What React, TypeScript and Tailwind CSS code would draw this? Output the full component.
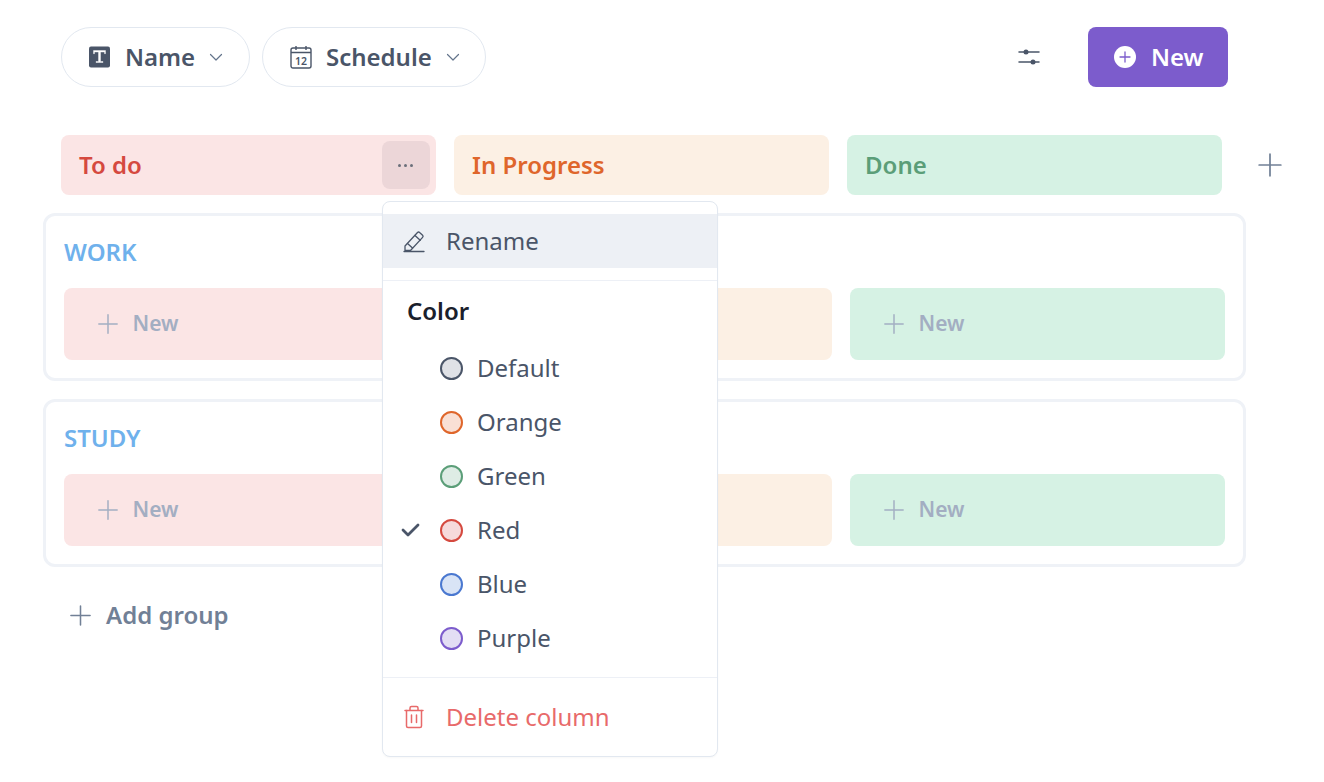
import React from 'react';

const FONT = "font-['Noto_Sans','Open_Sans',sans-serif]";

const COLUMNS = [
  { name: 'To do', bg: 'bg-[#fbe5e5]', text: 'text-[#d5493f]' },
  { name: 'In Progress', bg: 'bg-[#fcf0e4]', text: 'text-[#df662b]' },
  { name: 'Done', bg: 'bg-[#d6f2e4]', text: 'text-[#5b9e78]' },
];

const COLORS = [
  { name: 'Default', dot: 'bg-[#dfe1e6] border-[#4a5568]' },
  { name: 'Orange', dot: 'bg-[#f9e0d5] border-[#df662b]' },
  { name: 'Green', dot: 'bg-[#deece5] border-[#5b9e78]' },
  { name: 'Red', dot: 'bg-[#f6dadb] border-[#d5493f]', checked: true },
  { name: 'Blue', dot: 'bg-[#d9e4f6] border-[#4a78d0]' },
  { name: 'Purple', dot: 'bg-[#e3def4] border-[#7c5ccc]' },
];

function Plus({ size = 24, className = '' }: { size?: number; className?: string }) {
  return (
    <svg width={size} height={size} viewBox="0 0 24 24" fill="none" stroke="currentColor" strokeWidth="1.6" strokeLinecap="round" className={className}>
      <path d="M12 2v20M2 12h20" />
    </svg>
  );
}

function Chevron() {
  return (
    <svg width="14" height="9" viewBox="0 0 14 9" fill="none" stroke="#64748b" strokeWidth="1.2" strokeLinecap="round" strokeLinejoin="round">
      <path d="M1.5 1.5 7 7l5.5-5.5" />
    </svg>
  );
}

function TextIcon() {
  return (
    <svg width="22" height="22" viewBox="0 0 22 22">
      <rect width="21" height="21" y="0.5" rx="2" fill="#4a5568" />
      <path d="M4.5 4.500h12v3.200h-1V6h-4v9.500H14v1H7v-1h2.500V6h-4v1.700h-1z" fill="#fff" stroke="#fff" strokeWidth="0.4" />
    </svg>
  );
}

function CalendarIcon() {
  return (
    <svg width="22" height="24" viewBox="0 0 22 24" fill="none" stroke="#4a5568" strokeWidth="1.4">
      <rect x="1" y="3" width="20" height="20" rx="2" />
      <path d="M1 7.5h20M6 1v4M16 1v4" />
      <text x="11" y="19.5" textAnchor="middle" fontSize="10.5" fontWeight="600" fill="#4a5568" stroke="none" fontFamily="Noto Sans, sans-serif">12</text>
    </svg>
  );
}

function SlidersIcon() {
  return (
    <svg width="22" height="20" viewBox="0 0 22 20" fill="none" stroke="#4a5568" strokeWidth="1.5" strokeLinecap="round">
      <path d="M1 5h20M1 15h20" />
      <circle cx="8" cy="5" r="2.5" fill="#4a5568" stroke="none" />
      <circle cx="15" cy="15" r="2.5" fill="#4a5568" stroke="none" />
    </svg>
  );
}

function PencilIcon() {
  return (
    <svg width="24" height="24" viewBox="0 0 24 24" fill="none" stroke="#4a5568" strokeWidth="1.3" strokeLinejoin="round" strokeLinecap="round">
      <path d="M3 17 15.5 3.5a1.5 1.5 0 0 1 2.100 0l3 2.800a1.5 1.500 0 0 1 0 2.100L8.500 21.500H3z" />
      <path d="m13 6.500 5.200 4.800M5.500 14.500l5 4.600M2 22.500h20" />
    </svg>
  );
}

function TrashIcon() {
  return (
    <svg width="22" height="24" viewBox="0 0 22 24" fill="none" stroke="#e86a6a" strokeWidth="1.5" strokeLinecap="round" strokeLinejoin="round">
      <path d="M2 5.5h18M7 5.500V3a1.500 1.500 0 0 1 1.500-1.500h5A1.500 1.500 0 0 1 15 3v2.500" />
      <path d="M3.500 5.500v15.500a1.500 1.500 0 0 0 1.500 1.500h12a1.500 1.500 0 0 0 1.500-1.500V5.500M8.500 10v7.500M13.500 10v7.500" />
    </svg>
  );
}

function Group({ label }: { label: string }) {
  return (
    <div className="h-[168px] rounded-xl border-[3px] border-[#eff2f7] px-[18px] bg-white">
      <div className="h-[72px] flex items-center text-[24px] font-semibold text-[#6fb1ec]">{label}</div>
      <div className="flex gap-[18px]">
        {COLUMNS.map((c) => (
          <div key={c.name} className={`${c.bg} w-[375px] h-[72px] rounded-lg flex items-center pl-[33px] gap-[13.5px] text-[#a3aec2]`}>
            <Plus size={22} />
            <span className="text-[21px] font-semibold">New</span>
          </div>
        ))}
      </div>
    </div>
  );
}

function ColumnMenu() {
  return (
    <div className="absolute left-[382px] top-[201px] w-[336px] h-[556px] bg-white border border-[#e2e8f0] rounded-lg shadow-[0_1px_2px_rgba(0,0,0,0.03)] text-[#4a5568] text-[24px]">
      <div className="mt-[12px] h-[54px] bg-[#edf0f5] flex items-center pl-[19px] gap-[20px]">
        <PencilIcon />
        <span>Rename</span>
      </div>
      <div className="mt-[12px] border-t border-[#edf0f6]" />
      <div className="h-[60px] flex items-center pl-[24px] font-semibold text-[#1a202c]">Color</div>
      <div className="flex flex-col">
        {COLORS.map((c) => (
          <div key={c.name} className="h-[54px] flex items-center relative pl-[57px]">
            {c.checked && (
              <svg width="20" height="16" viewBox="0 0 20 16" fill="none" stroke="#4a5568" strokeWidth="2.8" strokeLinecap="round" strokeLinejoin="round" className="absolute left-[18px] top-[19px]">
                <path d="m2 8 5 5L17 3" />
              </svg>
            )}
            <span className={`w-[23px] h-[23px] rounded-full border-2 ${c.dot}`} />
            <span className="ml-[14px]">{c.name}</span>
          </div>
        ))}
      </div>
      <div className="mt-[12px] border-t border-[#edf0f6]" />
      <div className="h-[78px] flex items-center pl-[20px] gap-[21px] text-[#e86a6a]">
        <TrashIcon />
        <span>Delete column</span>
      </div>
    </div>
  );
}

export default function App() {
  return (
    <div className={`${FONT} relative w-[1324px] h-[782px] overflow-hidden bg-white`}>
      <div className="flex items-center pt-[27px] pl-[61px]">
        <button className="h-[60px] w-[189px] rounded-full border border-[#e2e8f0] flex items-center pl-[27px] text-[#4a5568]">
          <TextIcon />
          <span className="ml-[14px] text-[24px] font-semibold">Name</span>
          <span className="ml-[14px]"><Chevron /></span>
        </button>
        <button className="ml-[12px] h-[60px] w-[224px] rounded-full border border-[#e2e8f0] flex items-center pl-[27px] text-[#4a5568]">
          <CalendarIcon />
          <span className="ml-[14px] text-[24px] font-semibold">Schedule</span>
          <span className="ml-[14px]"><Chevron /></span>
        </button>
        <div className="ml-[532px] w-[22px] flex"><SlidersIcon /></div>
        <button className="ml-[48px] h-[60px] w-[140px] rounded-lg bg-[#7c5ccc] flex items-center pl-[26px] gap-[15px] text-white">
          <svg width="22" height="22" viewBox="0 0 22 22">
            <circle cx="11" cy="11" r="11" fill="#fff" />
            <path d="M11 6v10M6 11h10" stroke="#7c5ccc" strokeWidth="1.3" strokeLinecap="round" />
          </svg>
          <span className="text-[24px] font-semibold">New</span>
        </button>
      </div>

      <div className="mt-[48px] pl-[61px] flex gap-[18px] items-center">
        {COLUMNS.map((c, i) => (
          <div key={c.name} className={`${c.bg} w-[375px] h-[60px] rounded-lg flex items-center justify-between pl-[18px] pr-[6px]`}>
            <span className={`${c.text} text-[24px] font-semibold`}>{c.name}</span>
            {i === 0 && (
              <div className="w-[48px] h-[48px] rounded-lg bg-[#ecd6d8] flex items-center justify-center gap-[3px] pr-px">
                <span className="w-[3px] h-[3px] rounded-full bg-[#6b6f7a]" />
                <span className="w-[3px] h-[3px] rounded-full bg-[#6b6f7a]" />
                <span className="w-[3px] h-[3px] rounded-full bg-[#6b6f7a]" />
              </div>
            )}
          </div>
        ))}
        <span className="ml-[17px] text-[#718096] flex"><Plus size={26} /></span>
      </div>

      <div className="mt-[18px] ml-[43px] w-[1203px] flex flex-col gap-[18px]">
        <Group label="WORK" />
        <Group label="STUDY" />
      </div>

      <div className="mt-[30px] ml-[69px] flex items-center gap-[14px] text-[#718096]">
        <Plus size={23} />
        <span className="text-[24px] font-semibold">Add group</span>
      </div>

      <ColumnMenu />
    </div>
  );
}
